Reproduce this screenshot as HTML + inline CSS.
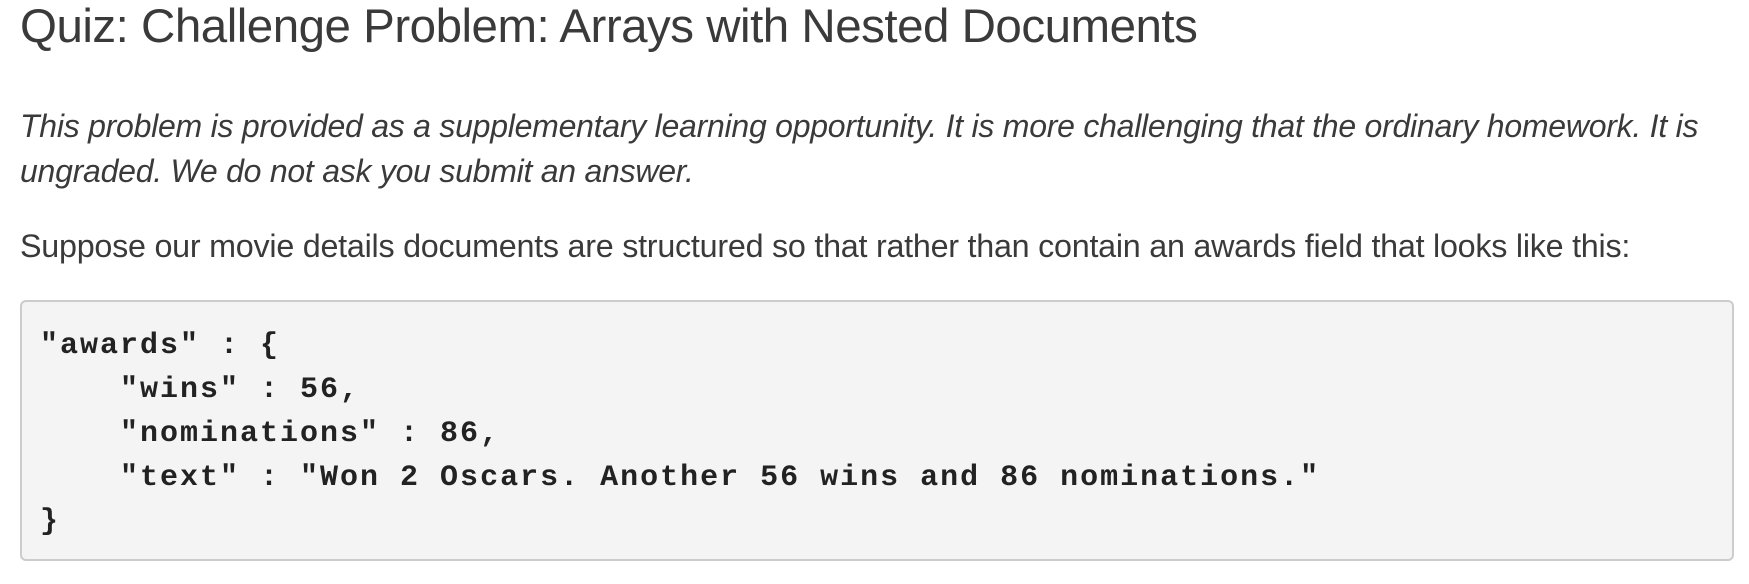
<!DOCTYPE html>
<html><head><meta charset="utf-8"><style>
html,body{margin:0;padding:0;background:#fff;width:1749px;height:584px;overflow:hidden}
body{font-family:"Liberation Sans",sans-serif;color:#333}
h1{position:absolute;left:20px;top:0;margin:0;font-weight:normal;font-size:47.5px;line-height:54px;letter-spacing:-0.5px;color:#3a3a3a}
.p{position:absolute;left:20px;margin:0;font-size:32px;line-height:45px;color:#3a3a3a;letter-spacing:-0.25px;white-space:nowrap}
.i{font-style:italic;top:104px}
.s{top:224px;font-size:32.3px}
pre{position:absolute;left:20px;top:300px;width:1714px;height:261px;box-sizing:border-box;margin:0;background:#f4f4f4;border:2px solid #ccc;border-radius:6px;padding:22px 18px 0;font-family:"Liberation Mono",monospace;font-size:30px;line-height:44px;color:#222;font-weight:bold;letter-spacing:2px}
</style></head><body>
<h1>Quiz: Challenge Problem: Arrays with Nested Documents</h1>
<p class="p i">This problem is provided as a supplementary learning opportunity. It is more challenging that the ordinary homework. It is<br>ungraded. We do not ask you submit an answer.</p>
<p class="p s">Suppose our movie details documents are structured so that rather than contain an awards field that looks like this:</p>
<pre>"awards" : {
    "wins" : 56,
    "nominations" : 86,
    "text" : "Won 2 Oscars. Another 56 wins and 86 nominations."
}</pre>
</body></html>
